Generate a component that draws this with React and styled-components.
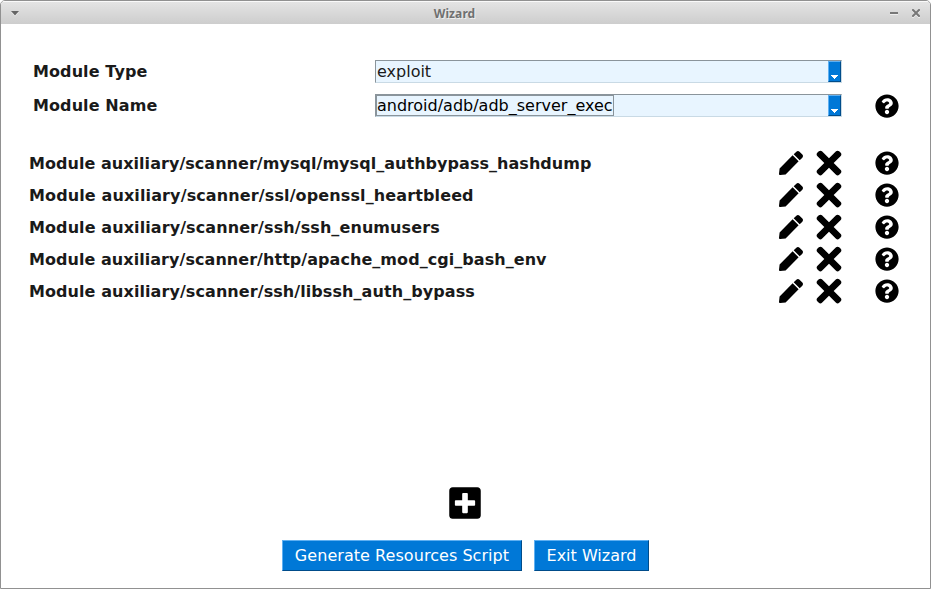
import React from 'react';
import styled, { createGlobalStyle } from 'styled-components';
import { FaQuestionCircle, FaPen, FaTimes, FaPlusSquare } from 'react-icons/fa';

const Global = createGlobalStyle`
  * { box-sizing: border-box; }
  body { margin: 0; font-family: "DejaVu Sans", sans-serif; background: #fff; color: #1a1a1a; overflow: hidden; }
`;
const Window = styled.div`
  width: 931px; height: 589px; border: 1px solid #919191; border-radius: 5px 5px 0 0;
  display: flex; flex-direction: column; background: #fff; overflow: hidden;
`;
const TitleBar = styled.header`
  height: 23px; flex: none; display: grid; grid-template-columns: 38px 1fr 60px; align-items: center;
  background: linear-gradient(#e4e4e4, #cdcdcd); border-top: 1px solid #fafafa;
`;
const Title = styled.h1`
  margin: 0; text-align: center; font: bold 12px "Noto Sans", sans-serif; letter-spacing: 0.1px;
  color: #707070; text-shadow: 1px 1px 0 #eee; padding-top: 1px;
`;
const Glyph = styled.svg`display: block; margin-left: ${p => p.$left || 0}px; filter: drop-shadow(0 1px 0 #eee);`;
const Controls = styled.div`display: flex; align-items: center;`;
const Fields = styled.section`padding: 36px 0 0 32px;`;
const Field = styled.div`
  height: 23px; margin-bottom: 11px; display: grid; grid-template-columns: 342px 467px 1fr;
  grid-template-rows: 23px; align-items: start;
`;
const Label = styled.label`font-weight: bold; font-size: 16px; line-height: 23px; letter-spacing: 0.09px;`;
const Combo = styled.div`
  height: 23px; display: flex; background: #e8f5ff; border: 1px solid;
  border-color: #8a949b #c9dae5 #c9dae5 #8a949b;
`;
const Value = styled.span`
  font-size: 16px; line-height: 21px; padding: 0 1px; height: 21px;
  color: ${p => p.$active ? '#000' : '#1a1a1a'};
  outline: ${p => p.$active ? '1px solid #8a949b' : 'none'}; outline-offset: -1px;
`;
const Arrow = styled.button`
  margin-left: auto; width: 13px; height: 21px; padding: 0; background: #0078d7;
  border: 1px solid; border-color: #5fb0f2 #004c8a #004c8a #5fb0f2;
  display: flex; align-items: flex-end; justify-content: center;
`;
const Help = styled(FaQuestionCircle)`width: 24px; height: 24px; color: #000; justify-self: end; margin-right: 31px;`;
const List = styled.ul`list-style: none; margin: 0; padding: 19px 0 0 28px; flex: 1;`;
const Row = styled.li`
  height: 32px; display: grid; grid-template-columns: 750px 37px 26px 1fr; grid-template-rows: 32px; align-items: center;
`;
const Name = styled.span`font-weight: bold; font-size: 16px; letter-spacing: ${p => p.$tracking}px;`;
const Pencil = styled(FaPen)`width: 24px; height: 24px; color: #000;`;
const Remove = styled(FaTimes)`width: 26px; height: 36px; color: #000; margin: -2px 0;`;
const Footer = styled.footer`display: flex; flex-direction: column; align-items: center; padding-bottom: 17px; gap: 19px;`;
const Add = styled(FaPlusSquare)`width: 36px; height: 36px; color: #000; display: block; margin-right: 1px;`;
const Buttons = styled.div`display: flex; gap: 12px;`;
const Button = styled.button`
  width: ${p => p.$width}px; height: 31px; padding: 0; background: #0078d7; color: #fff; font: 16px "DejaVu Sans", sans-serif;
  letter-spacing: ${p => p.$tracking || 0}px;
  border: 1px solid; border-color: #5fb0f2 #004c8a #004c8a #5fb0f2;
`;

const modules = [
  { path: 'mysql/mysql_authbypass_hashdump', tracking: 0.04 },
  { path: 'ssl/openssl_heartbleed', tracking: 0.12 },
  { path: 'ssh/ssh_enumusers', tracking: 0.09 },
  { path: 'http/apache_mod_cgi_bash_env', tracking: 0.05 },
  { path: 'ssh/libssh_auth_bypass', tracking: 0.075 },
];

function Select({ label, value, active, help }) {
  return (
    <Field>
      <Label>{label}</Label>
      <Combo>
        <Value $active={active}>{value}</Value>
        <Arrow aria-label="Open">
          <svg width="7" height="6" shapeRendering="crispEdges" display="block">
            <path d="M0 0h7v1h-1v1h-1v1h-1v1h-1v-1h-1v-1h-1v-1h-1z" fill="#fff" />
          </svg>
        </Arrow>
      </Combo>
      {help && <Help />}
    </Field>
  );
}

export default function App() {
  return (
    <>
      <Global />
      <Window>
        <TitleBar>
          <Glyph $left={10} width="8" height="5"><path d="M0 0h8L4 4.5z" fill="#666" /></Glyph>
          <Title>Wizard</Title>
          <Controls>
            <Glyph $left={20} width="8" height="8"><path d="M0 4h8" stroke="#777" strokeWidth="2" /></Glyph>
            <Glyph $left={14} width="8" height="8"><path d="M1 1l6 6M7 1L1 7" stroke="#777" strokeWidth="2" strokeLinecap="square" /></Glyph>
          </Controls>
        </TitleBar>
        <Fields>
          <Select label="Module Type" value="exploit" />
          <Select label="Module Name" value="android/adb/adb_server_exec" active help />
        </Fields>
        <List>
          {modules.map(m => (
            <Row key={m.path}>
              <Name $tracking={m.tracking}>Module auxiliary/scanner/{m.path}</Name>
              <Pencil /><Remove /><Help />
            </Row>
          ))}
        </List>
        <Footer>
          <Add />
          <Buttons>
            <Button $width={240} $tracking={0.05}>Generate Resources Script</Button>
            <Button $width={115}>Exit Wizard</Button>
          </Buttons>
        </Footer>
      </Window>
    </>
  );
}
